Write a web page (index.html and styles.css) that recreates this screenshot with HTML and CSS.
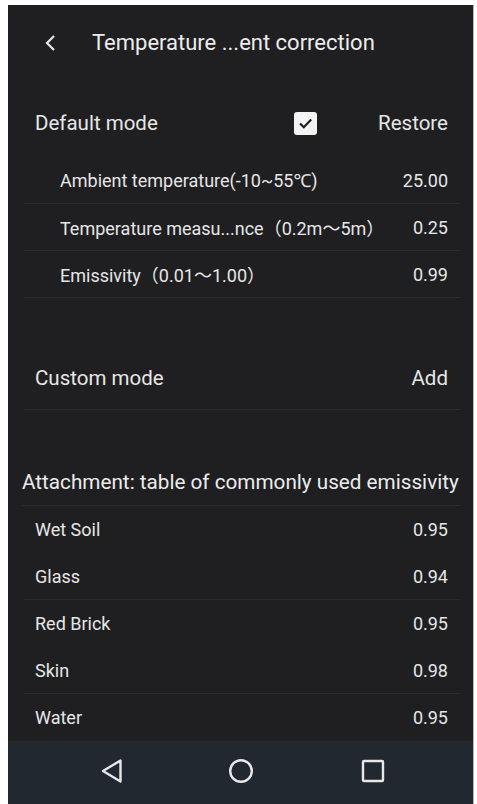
FILE: index.html
```html
<!DOCTYPE html>
<html>
<head>
<meta charset="utf-8">
<link rel="stylesheet" href="styles.css">
</head>
<body>
<div class="screen">
  <header class="topbar">
    <svg class="back" width="14" height="18" viewBox="0 0 14 18"><path d="M10 2 L3 9 L10 16" fill="none" stroke="#e8e8e8" stroke-width="2.2"/></svg>
    <span class="title">Temperature ...ent correction</span>
  </header>

  <div class="mode-row default-row">
    <span class="grow">Default mode</span>
    <span class="checkbox"><svg width="23" height="23" viewBox="0 0 23 23"><path d="M6 11.5 L9.8 15.2 L17.2 7.6" fill="none" stroke="#1f1f22" stroke-width="2.2"/></svg></span>
    <span>Restore</span>
  </div>

  <div class="sub-row line"><span>Ambient temperature(-10~55℃)</span><span>25.00</span></div>
  <div class="sub-row line"><span>Temperature measu...nce<span class="cjk">（</span>0.2m<span class="cjk">～</span>5m<span class="cjk">）</span></span><span>0.25</span></div>
  <div class="sub-row line"><span>Emissivity<span class="cjk">（</span>0.01<span class="cjk">～</span>1.00<span class="cjk">）</span></span><span>0.99</span></div>

  <div class="spacer"></div>

  <div class="mode-row custom-row line"><span>Custom mode</span><span>Add</span></div>

  <div class="spacer"></div>

  <div class="attach line">Attachment: table of commonly used emissivity</div>

  <div class="table">
    <div class="t-row"><span>Wet Soil</span><span>0.95</span></div>
    <div class="t-row line"><span>Glass</span><span>0.94</span></div>
    <div class="t-row"><span>Red Brick</span><span>0.95</span></div>
    <div class="t-row line"><span>Skin</span><span>0.98</span></div>
    <div class="t-row"><span>Water</span><span>0.95</span></div>
  </div>

  <nav class="navbar">
    <svg width="24" height="26" viewBox="0 0 24 26"><path d="M20.5 2.5 L20.5 23.5 L3 13 Z" fill="none" stroke="#e8e8e8" stroke-width="2.4" stroke-linejoin="round"/></svg>
    <svg width="26" height="26" viewBox="0 0 26 26"><circle cx="13" cy="13" r="10.8" fill="none" stroke="#e8e8e8" stroke-width="2.4"/></svg>
    <svg width="24" height="24" viewBox="0 0 24 24"><rect x="2" y="2" width="20" height="20" rx="1" fill="none" stroke="#e8e8e8" stroke-width="2.4"/></svg>
  </nav>
</div>
</body>
</html>
```

FILE: styles.css
```css
html, body {
  margin: 0;
  padding: 0;
  background: #ffffff;
}
body {
  font-family: Roboto, "Noto Sans", "DejaVu Sans", sans-serif;
  color: #e6e6e6;
}
.screen {
  margin: 5px 0 0 8px;
  width: 465px;
  height: 799px;
  background: #1f1f22;
  border-right: 1px solid #b8b8b8;
  display: flex;
  flex-direction: column;
  overflow: hidden;
}
.topbar {
  height: 75px;
  flex: none;
  display: flex;
  align-items: center;
  padding-left: 36px;
}
.back {
  margin-right: 34px;
}
.title {
  font-size: 22px;
  color: #ececec;
}
.mode-row {
  display: flex;
  align-items: center;
  padding: 0 25px 0 27px;
  font-size: 20.5px;
  flex: none;
}
.grow {
  flex: 1;
}
.default-row {
  height: 68px;
  padding-top: 9px;
}
.checkbox {
  width: 23px;
  height: 23px;
  background: #f4f4f4;
  border-radius: 3px;
  display: flex;
  margin-right: 61px;
}
.line {
  border-bottom: 1px solid #2c2c30;
  margin-left: 16px !important;
  margin-right: 13px !important;
}
.sub-row {
  height: 46px;
  display: flex;
  align-items: center;
  justify-content: space-between;
  padding: 0 12px 0 36px;
  margin: 0 13px 0 16px;
  font-size: 18px;
  flex: none;
  white-space: nowrap;
}
.cjk {
  font-family: "Noto Sans CJK SC", sans-serif;
}
.spacer {
  height: 48px;
  flex: none;
}
.custom-row {
  height: 63px;
  justify-content: space-between;
  padding: 0 12px 0 11px;
}
.attach {
  height: 47px;
  flex: none;
  display: flex;
  align-items: center;
  padding-left: 0;
  margin-left: 14px !important;
  font-size: 20.7px;
  color: #ececec;
  white-space: nowrap;
}
.table {
  flex: none;
}
.t-row {
  height: 47px;
  display: flex;
  align-items: center;
  justify-content: space-between;
  padding: 0 25px 0 27px;
  font-size: 18px;
}
.t-row.line {
  height: 46px;
  padding: 0 12px 0 11px;
}
.navbar {
  flex: 1;
  background: #222830;
  display: flex;
  align-items: center;
  padding-bottom: 4px;
}
.navbar svg:nth-child(1) { margin-left: 92px; }
.navbar svg:nth-child(2) { margin-left: 104px; }
.navbar svg:nth-child(3) { margin-left: 107px; }
```
